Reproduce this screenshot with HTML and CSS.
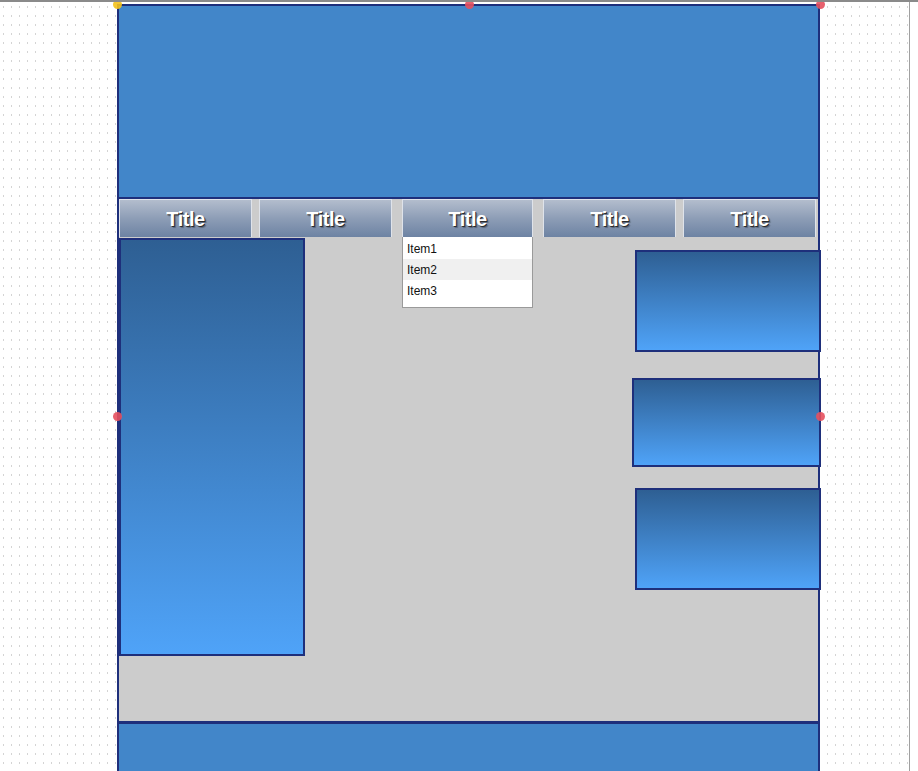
FILE: index.html
```
<!DOCTYPE html>
<html>
<head>
<meta charset="utf-8">
<link rel="stylesheet" href="styles.css">
</head>
<body>
<div class="canvas">
  <div class="frame">
    <div class="header"></div>
    <div class="tabs">
      <div class="tab t1">Title</div>
      <div class="tab t2">Title</div>
      <div class="tab t3">Title</div>
      <div class="tab t4">Title</div>
      <div class="tab t5">Title</div>
    </div>
    <div class="content">
      <div class="side"></div>
      <div class="boxes">
        <div class="box b1"></div>
        <div class="box b2"></div>
        <div class="box b3"></div>
      </div>
      <div class="dropdown">
        <div class="item">Item1</div>
        <div class="item hover">Item2</div>
        <div class="item">Item3</div>
      </div>
    </div>
    <div class="footer"></div>
    <span class="handle yellow h-tl"></span>
    <span class="handle h-tm"></span>
    <span class="handle h-tr"></span>
    <span class="handle h-ml"></span>
    <span class="handle h-mr"></span>
  </div>
  <div class="rail"></div>
</div>
</body>
</html>
```
FILE: styles.css
```
html, body {
  margin: 0;
  padding: 0;
  height: 100%;
  overflow: hidden;
  font-family: "Liberation Sans", Arial, sans-serif;
}
.canvas {
  position: relative;
  height: 771px;
  width: 918px;
  box-sizing: border-box;
  border-top: 2px solid #8a8a8a;
  padding: 2px 0 0 117px;
  background-color: #ffffff;
  background-image:
    linear-gradient(to right, transparent 0, transparent 1px, #ffffff 1px),
    linear-gradient(to bottom, #d4d4d4 0, #d4d4d4 2px, transparent 2px);
  background-size: 8px 9px, 8px 9px;
  background-position: 3px 4px, 3px 4px;
  overflow: hidden;
}
.rail {
  position: absolute;
  top: -2px;
  right: 0;
  width: 8px;
  height: 773px;
  background: #ffffff;
  border-left: 1px solid #a0a0a0;
}
.frame {
  position: relative;
  width: 703px;
  box-sizing: border-box;
  border: 2px solid #1e2f7b;
  border-bottom: none;
  height: 780px;
  background: #cccccc;
}
.header {
  height: 191px;
  background: #4286c9;
  border-bottom: 2px solid #1e2f7b;
}
.tabs {
  display: flex;
  height: 38px;
  background: #cccccc;
}
.tab {
  box-sizing: border-box;
  height: 38px;
  width: 133px;
  border: 1px solid #dfe3ea;
  border-bottom: none;
  background: linear-gradient(to bottom, #b3bdcd 0%, #8d9db6 50%, #6d83a3 100%);
  color: #ffffff;
  font-weight: bold;
  font-size: 20px;
  letter-spacing: -0.5px;
  text-align: center;
  line-height: 38px;
  text-shadow: 1px 1px 0 #2a2a2a, 2px 2px 1px rgba(0,0,0,0.3);
}
.t2 { margin-left: 7px; }
.t3 { margin-left: 10px; width: 131px; }
.t4 { margin-left: 10px; }
.t5 { margin-left: 7px; }
.content {
  position: relative;
  display: flex;
  justify-content: space-between;
  height: 484px;
  background: #cccccc;
  border-bottom: 3px solid #1e2f7b;
}
.side {
  margin-top: 1px;
  width: 186px;
  height: 418px;
  box-sizing: border-box;
  border: 2px solid #1e2f7b;
  background: linear-gradient(to bottom, #2e5f93 0%, #4fa3f8 100%);
}
.boxes {
  display: flex;
  flex-direction: column;
  align-items: flex-end;
  margin-right: -3px;
}
.box {
  box-sizing: border-box;
  border: 2px solid #1e2f7b;
  background: linear-gradient(to bottom, #2e5f93 0%, #4fa3f8 100%);
}
.b1 { margin-top: 13px; width: 186px; height: 102px; }
.b2 { margin-top: 26px; width: 189px; height: 89px; }
.b3 { margin-top: 21px; width: 186px; height: 102px; }
.dropdown {
  position: absolute;
  top: 0;
  left: 283px;
  width: 131px;
  height: 71px;
  box-sizing: border-box;
  background: #ffffff;
  border: 1px solid #9a9a9a;
  border-top: none;
  padding-top: 1px;
}
.item {
  height: 21px;
  line-height: 22px;
  padding-left: 4px;
  font-size: 12px;
  color: #111111;
}
.item.hover { background: #f0f0f0; }
.footer {
  height: 60px;
  background: #4286c9;
}
.handle {
  position: absolute;
  width: 9px;
  height: 9px;
  border-radius: 50%;
  background: #e6505e;
  opacity: 0.9;
}
.handle.yellow { background: #f4c21c; }
.h-tl { left: -6px; top: -6px; }
.h-tm { left: 346px; top: -6px; }
.h-tr { right: -7px; top: -6px; }
.h-ml { left: -6px; top: 406px; }
.h-mr { right: -7px; top: 406px; }
```
